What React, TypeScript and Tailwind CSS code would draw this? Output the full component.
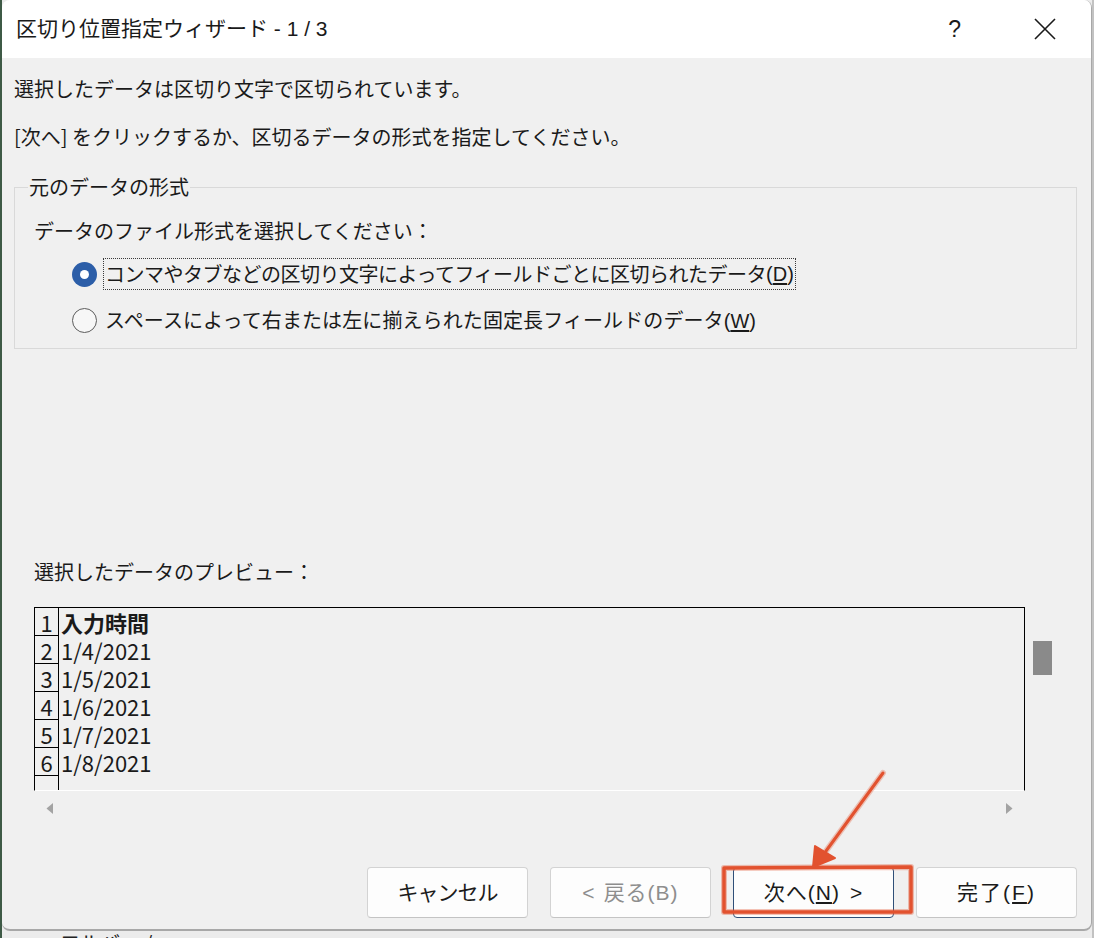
import React from "react";

const JP = "font-['Noto_Sans_CJK_JP','Noto_Sans',sans-serif]";
const LJP = "font-['Liberation_Sans','Noto_Sans_CJK_JP',sans-serif]";

function Btn({ children, disabled, focused, extra }: { children: React.ReactNode; disabled?: boolean; focused?: boolean; extra?: string }) {
  return (
    <div
      className={`w-[161px] h-[51px] rounded-[4px] flex items-center justify-center text-[21px] ${LJP} ${extra ?? ""} bg-[#fdfdfd] border ${
        focused ? "border-[#2f4f78]" : "border-[#d3d3d3] border-b-[#c4c4c4]"
      } ${disabled ? "text-[#8e8e8e]" : "text-[#1b1b1b]"}`}
    >
      {children}
    </div>
  );
}

export default function App() {
  const rows = ["入力時間", "1/4/2021", "1/5/2021", "1/6/2021", "1/7/2021", "1/8/2021", ""];
  return (
    <div className={`relative w-[1094px] h-[938px] overflow-hidden bg-[#ececec] flex ${JP}`}>
      <div className="w-[2px] shrink-0 bg-[#3e5a46]" />
      <div className="w-[1090px] flex flex-col shrink-0">
        <div className="h-[931px] shrink-0 rounded-[8px] bg-[#f0f0f0] border-r border-b-[2px] border-[#a8a8a8] overflow-hidden flex flex-col">
          {/* title bar */}
          <div className="h-[58px] shrink-0 bg-white flex items-center pl-[14px]">
            <span className={`text-[21px] text-[#1a1a1a] ${LJP}`}>区切り位置指定ウィザード - 1 / 3</span>
            <span className="ml-auto text-[23px] text-[#1a1a1a] font-['Liberation_Sans',sans-serif]">?</span>
            <svg className="ml-[73px] mr-[35px]" width="22" height="22" viewBox="0 0 22 22">
              <path d="M1 1 L21 21 M21 1 L1 21" stroke="#1a1a1a" strokeWidth="1.6" />
            </svg>
          </div>
          {/* body */}
          <div className="flex-1 flex flex-col pl-[12px] pr-[14px] pb-[11px] text-[#1a1a1a]">
            <p className="mt-[17px] text-[20px] leading-[28px]">選択したデータは区切り文字で区切られています。</p>
            <p className="mt-[20px] text-[20px] leading-[28px]">[次へ] をクリックするか、区切るデータの形式を指定してください。</p>
            <fieldset className="mt-[22px] border border-[#d9d9d9] p-0 m-0">
              <legend className="ml-[13px] text-[20px] leading-[28px] px-[1px]">元のデータの形式</legend>
              <div className="pl-[19px] pt-[16px] pb-[12px]">
                <div className="text-[20px] leading-[28px]">データのファイル形式を選択してください：</div>
                <div className="mt-[13px] h-[32px] flex items-center pl-[38px]">
                  <div className="w-[25px] h-[25px] rounded-full bg-[#2c5ea8] flex items-center justify-center">
                    <div className="w-[9px] h-[9px] rounded-full bg-white" />
                  </div>
                  <div className="ml-[6px] h-[32px] flex items-center border border-dotted border-[#3a3a3a] px-[1px] text-[20px] tracking-[-0.5px]">
                    コンマやタブなどの区切り文字によってフィールドごとに区切られたデータ
                    <span className={`${LJP} tracking-normal`}>
                      (<u className="underline-offset-2">D</u>)
                    </span>
                  </div>
                </div>
                <div className="mt-[14px] h-[32px] flex items-center pl-[38px]">
                  <div className="w-[25px] h-[25px] rounded-full border-[1.5px] border-[#5c5c5c] bg-[#f7f7f7]" />
                  <div className="ml-[8px] text-[20px] tracking-[0.1px]">
                    スペースによって右または左に揃えられた固定長フィールドのデータ
                    <span className={`${LJP} tracking-normal`}>
                      (<u className="underline-offset-2">W</u>)
                    </span>
                  </div>
                </div>
              </div>
            </fieldset>
            <div className="mt-[209px] pl-[20px] text-[20px] leading-[28px]">選択したデータのプレビュー：</div>
            <div className="mt-[21px] flex">
              <div className="ml-[20px] w-[991px] h-[184px] border-l border-t border-r border-black border-b border-b-white overflow-hidden flex flex-col">
                {rows.map((r, i) => (
                  <div key={i} className="flex h-[28px] shrink-0">
                    <div className="w-[24px] shrink-0 border-r border-b border-black flex items-center justify-center text-[22px] leading-none">
                      {i + 1 <= 6 ? i + 1 : ""}
                    </div>
                    <div className={`pl-[2px] flex items-center text-[22px] leading-none ${i === 0 ? "font-bold" : ""}`}>{r}</div>
                  </div>
                ))}
              </div>
              <div className="ml-[8px] pt-[34px]">
                <div className="w-[19px] h-[34px] bg-[#8a8a8a]" />
              </div>
            </div>
            <div className="mt-[12px] ml-[20px] w-[991px] px-[12px] flex justify-between">
              <svg width="8" height="11" viewBox="0 0 8 11">
                <path d="M7 0 L7 11 L0.5 5.5 Z" fill="#a3a3a3" />
              </svg>
              <svg width="8" height="11" viewBox="0 0 8 11">
                <path d="M1 0 L1 11 L7.5 5.5 Z" fill="#a3a3a3" />
              </svg>
            </div>
            <div className="mt-auto flex justify-end gap-[22px]">
              <Btn extra="tracking-[-1px]">キャンセル</Btn>
              <Btn disabled extra="tracking-[1px]">
                <span className="mr-[8px]">&lt;</span>戻る(B)
              </Btn>
              <Btn focused extra="tracking-[1px]">
                次へ(<u className="underline-offset-2">N</u>)<span className="ml-[10px]">&gt;</span>
              </Btn>
              <Btn extra="tracking-[2px]">
                完了(<u className="underline-offset-2">F</u>)
              </Btn>
            </div>
          </div>
        </div>
        <div className="flex-1 overflow-hidden pl-[58px]">
          <div className="text-[20px] leading-[20px] text-[#222] mt-[2px]">ロルバー /</div>
        </div>
      </div>
      <div className="w-[2px] shrink-0 bg-[#c2c2c2]" />
      {/* annotation overlay */}
      <svg className="absolute left-0 top-0 pointer-events-none" width="1094" height="938" viewBox="0 0 1094 938">
        <g stroke="#e2522f" strokeLinecap="round" strokeLinejoin="round" fill="none">
          <path d="M724 868 L911 867 L911 912 L724 912 Z" strokeWidth="6" strokeOpacity="0.35" />
          <path d="M724 868 L911 867 L911 912 L724 912 Z" strokeWidth="3.5" />
          <path d="M883 773 L826 851" strokeWidth="6" strokeOpacity="0.3" />
          <path d="M883 773 L826 851" strokeWidth="3" />
        </g>
        <path d="M813 867 L815 846 L835 858 Z" fill="#e2522f" stroke="#e2522f" strokeWidth="2" strokeLinejoin="round" />
      </svg>
    </div>
  );
}
